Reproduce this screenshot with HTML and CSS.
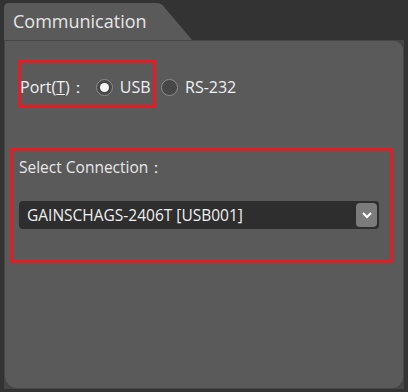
FILE: index.html
```html
<html lang="en">
    <head>
        <title>Communication</title>
        <link rel="stylesheet" href="styles.css">
    </head>
    <body>
        <div class="window">
            <div class="tab">Communication</div>
            <div class="panel">
                <div class="panel-inner">
                    <div class="port-row marked">
                        <span class="label">Port(<u>T</u>)：</span>
                        <span class="radio checked"></span>
                        <span class="option">USB</span>
                    </div>
                    <div class="port-extra">
                        <span class="radio"></span>
                        <span class="option">RS-232</span>
                    </div>
                    <div class="connection marked">
                        <div class="label">Select Connection：</div>
                        <div class="combo">
                            <span class="combo-text">GAINSCHAGS-2406T [USB001]</span>
                            <span class="combo-button">
                                <svg width="12" height="8" viewBox="0 0 12 8">
                                    <path d="M2 2 L6 6 L10 2" fill="none" stroke="#fff" stroke-width="2"/>
                                </svg>
                            </span>
                        </div>
                    </div>
                </div>
            </div>
        </div>
    </body>
</html>
```

FILE: styles.css
```css
body {
    margin: 0;
    background-color: #333333;
    font-family: "Open Sans", sans-serif;
    color: #f0f0f0;
}
.window {
    width: 400px;
    height: 386px;
    padding: 3px 4px;
    display: flex;
    flex-direction: column;
}
.tab {
    width: 190px;
    height: 37px;
    flex: none;
    background-color: #5a5a5a;
    clip-path: path('M0 5 Q0 0 5 0 L152 0 Q158 0 161 5 L188 37 L0 37 Z');
    font-size: 18px;
    line-height: 37px;
    padding-left: 9px;
    box-sizing: border-box;
    color: #e6e6e6;
}
.panel {
    flex: 1;
    background-color: #454545;
    padding: 1px;
    display: flex;
}
.panel-inner {
    flex: 1;
    background-color: #5a5a5a;
    border-radius: 0 9px 11px 12px;
    position: relative;
    padding: 19px 0 0 5px;
}
.marked {
    border: 3px solid #e31c26;
    box-sizing: border-box;
}
.port-row {
    margin-left: 8px;
    width: 138px;
    height: 48px;
    display: flex;
    align-items: center;
    font-size: 16px;
    padding-top: 6px;
}
.port-row .label {
    margin-left: -1px;
    margin-right: 10px;
}
.port-extra {
    position: absolute;
    left: 156px;
    top: 19px;
    height: 48px;
    display: flex;
    align-items: center;
    font-size: 16px;
    padding-top: 6px;
    box-sizing: border-box;
}
.radio {
    width: 17px;
    height: 17px;
    border-radius: 50%;
    border: 1px solid #8e8e8e;
    background-color: #474747;
    box-sizing: border-box;
    display: flex;
    align-items: center;
    justify-content: center;
    margin-right: 7px;
}
.radio.checked::after {
    content: "";
    width: 9px;
    height: 9px;
    border-radius: 50%;
    background-color: #f4f4f4;
}
.connection {
    margin-top: 40px;
    width: 383px;
    height: 115px;
    padding: 5px 0 0 6px;
}
.connection .label {
    font-size: 15.5px;
    color: #e8e8e8;
}
.combo {
    margin-top: 22px;
    width: 360px;
    height: 28px;
    background-color: #2e2e2e;
    border-radius: 4px;
    display: flex;
    align-items: center;
    justify-content: space-between;
}
.combo-text {
    font-size: 15.5px;
    padding-left: 8px;
}
.combo-button {
    width: 21px;
    height: 24px;
    margin-right: 2px;
    background-color: #7b7b7b;
    border-radius: 4px;
    display: flex;
    align-items: center;
    justify-content: center;
}
```
